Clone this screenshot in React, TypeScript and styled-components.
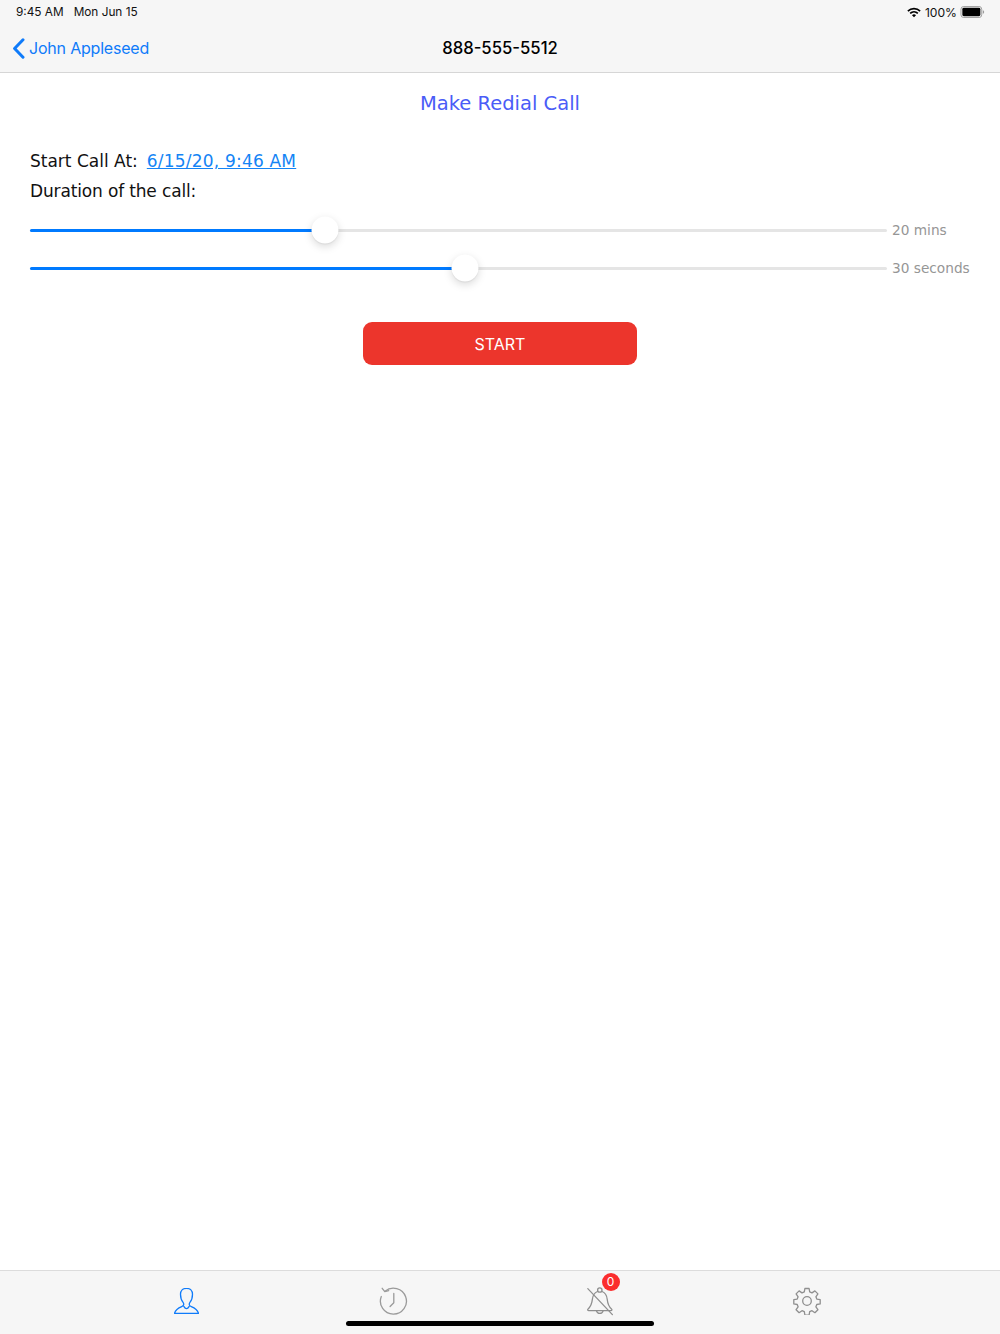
import React from "react";
import styled, { createGlobalStyle } from "styled-components";

const Global = createGlobalStyle`
  html, body { margin: 0; padding: 0; background: #fff; }
  #root { height: 1334px; }
  * { box-sizing: border-box; }
`;

const Page = styled.div`
  width: 1000px;
  height: 1334px;
  display: flex;
  flex-direction: column;
  overflow: hidden;
  font-family: "DejaVu Sans", sans-serif;
`;

const Header = styled.header`
  flex: none;
  height: 73px;
  background: #f6f6f6;
  border-bottom: 1px solid #d6d6d6;
  display: flex;
  flex-direction: column;
  font-family: Inter, "Liberation Sans", sans-serif;
`;

const StatusBar = styled.div`
  height: 24px;
  padding: 0 15px 0 16px;
  display: flex;
  align-items: center;
  font-size: 11.8px;
  color: #111;
`;

const StatusDate = styled.span`
  margin-left: 10px;
`;

const StatusRight = styled.div`
  margin-left: auto;
  display: flex;
  align-items: center;
  gap: 3px;
`;

const BatteryLevel = styled.span`
  margin-left: 1px;
  font-size: 12.1px;
`;

const NavBar = styled.div`
  flex: 1;
  display: grid;
  grid-template-columns: 1fr auto 1fr;
  align-items: center;
  padding: 0 12px;
`;

const BackLink = styled.div`
  display: flex;
  align-items: center;
  gap: 4px;
  color: #0f7bfa;
  font-size: 16px;
  letter-spacing: -0.2px;
`;

const NavTitle = styled.div`
  color: #000;
  font-size: 16.7px;
  font-weight: 500;
`;

const Main = styled.main`
  flex: 1;
  padding: 0 30px;
  display: flex;
  flex-direction: column;
`;

const Title = styled.h1`
  margin: 18px 0 0;
  text-align: center;
  color: #4a5cf7;
  font-size: 19.5px;
  line-height: 25px;
  font-weight: 400;
`;

const InfoLine = styled.div<{ $top: number; $tracking?: number }>`
  margin-top: ${(p) => p.$top}px;
  font-size: 17px;
  line-height: 22px;
  color: #111;
  letter-spacing: ${(p) => p.$tracking ?? 0}px;
`;

const DateLink = styled.a`
  margin-left: 9px;
  color: #1484f5;
  text-decoration: underline;
  letter-spacing: 0.2px;
`;

const Sliders = styled.div`
  margin-top: 13px;
  display: flex;
  flex-direction: column;
  gap: 8px;
`;

const SliderRow = styled.div`
  height: 30px;
  display: flex;
  align-items: center;
`;

const Track = styled.div`
  position: relative;
  flex: none;
  width: 857px;
  height: 3px;
  border-radius: 2px;
  background: #e5e5e5;
`;

const Fill = styled.div`
  height: 100%;
  border-radius: 2px;
  background: #007aff;
`;

const Thumb = styled.div`
  position: absolute;
  top: 50%;
  width: 27px;
  height: 27px;
  border-radius: 50%;
  transform: translate(-50%, -50%);
  background: #fff;
  box-shadow: 0 3px 8px rgba(0, 0, 0, 0.15), 0 1px 1px rgba(0, 0, 0, 0.06);
`;

const SliderValue = styled.span`
  margin-left: 5px;
  font-size: 13.7px;
  color: #969696;
  white-space: nowrap;
`;

const StartButton = styled.button`
  align-self: center;
  width: 274px;
  height: 43px;
  margin-top: 39px;
  border: 0;
  border-radius: 9px;
  background: #ec352c;
  color: #fff;
  font-family: Inter, "Liberation Sans", sans-serif;
  font-size: 16px;
`;

const TabBar = styled.nav`
  position: relative;
  flex: none;
  height: 64px;
  padding-right: 7px;
  background: #f6f6f6;
  border-top: 1px solid #dcdcdc;
  display: grid;
  grid-template-columns: repeat(4, 207px);
  justify-content: center;
`;

const Tab = styled.div<{ $color: string }>`
  position: relative;
  display: flex;
  justify-content: center;
  align-items: center;
  padding-bottom: 3px;
  color: ${(p) => p.$color};
`;

const Badge = styled.span`
  position: absolute;
  top: 2px;
  left: 50%;
  margin-left: 1.500px;
  width: 18px;
  height: 18px;
  border-radius: 50%;
  background: #fb2d2d;
  color: #fff;
  font-family: Inter, "Liberation Sans", sans-serif;
  font-size: 12px;
  line-height: 18px;
  text-align: center;
`;

const HomeIndicator = styled.div`
  position: absolute;
  left: 346px;
  bottom: 8px;
  width: 308px;
  height: 5px;
  border-radius: 3px;
  background: #000;
`;

const sliders = [
  { pct: (295 / 857) * 100, label: "20 mins" },
  { pct: (435 / 857) * 100, label: "30 seconds" },
];

const Wifi = () => (
  <svg width="14" height="11" viewBox="0 0 16 12">
    <path d="M1 4.400a10 10 0 0 1 14 0" fill="none" stroke="#000" strokeWidth="1.900" />
    <path d="M3.600 7a6.400 6.400 0 0 1 8.800 0" fill="none" stroke="#000" strokeWidth="1.900" />
    <path d="M8 11.500 5.700 9a3.300 3.300 0 0 1 4.600 0z" fill="#000" />
  </svg>
);

const Battery = () => (
  <svg width="25" height="12" viewBox="0 0 26 13">
    <rect x=".5" y=".5" width="22.500" height="12" rx="3" fill="none" stroke="#9a9a9a" />
    <rect x="2" y="2" width="19.500" height="9" rx="1.600" fill="#000" />
    <path d="M24.200 4.500c1 .3 1.400 1.100 1.400 2s-.4 1.700-1.400 2z" fill="#9a9a9a" />
  </svg>
);

const Chevron = () => (
  <svg width="13" height="21" viewBox="0 0 13 21">
    <path d="M11 1.800 2.600 10.500l8.400 8.700" fill="none" stroke="#0f7bfa" strokeWidth="3" strokeLinecap="round" strokeLinejoin="round" />
  </svg>
);

const lineIcon = { fill: "none", stroke: "currentColor", strokeWidth: 1.3, strokeLinecap: "round", strokeLinejoin: "round" } as const;

const PersonIcon = () => (
  <svg width="25" height="26" viewBox="0.500 1 25 26" {...lineIcon}>
    <path d="M13 1.400c-3.700 0-6 2.500-6 5.900 0 3.500 1.200 6.600 2.700 8.400.5.6.6 1.200.5 2-.1.9-.8 1.400-2 1.900-3 1.200-6.200 2.600-7.200 6.700h24c-1-4.100-4.200-5.500-7.200-6.700-1.200-.5-1.900-1-2-1.900-.1-.8 0-1.400.5-2C17.800 13.900 19 10.800 19 7.300c0-3.400-2.300-5.900-6-5.900z" />
    <path d="M10.300 19.400c.9 1.500 1.800 2.200 2.700 2.200s1.800-.7 2.700-2.200" />
  </svg>
);

const HistoryIcon = () => (
  <svg width="29" height="29" viewBox="0 0 29 29" {...lineIcon}>
    <path d="M6 4.300A13 13 0 1 1 2.300 9.500" />
    <path d="M3.200 1.300 5.800 4.600l3.900-.9" />
    <path d="M14.800 6.400v9.400l-3.700 3.700" />
  </svg>
);

const BellIcon = () => (
  <svg width="28" height="30" viewBox="0 0 28 30" {...lineIcon}>
    <circle cx="13.800" cy="4" r="2.200" />
    <path d="M11.500 5.500C7.800 6.900 6.800 9.800 6.400 13.200c-.4 3.600-1.200 7.100-4.300 9.700-.9.800-.4 1.800.7 1.800h22c1.100 0 1.600-1 .7-1.800-3.100-2.600-3.900-6.100-4.300-9.700-.4-3.400-1.400-6.300-5.100-7.700" />
    <path d="M10.500 24.800a3.400 3.400 0 0 0 6.600 0" />
    <path d="M1.800 2.600 26.400 28.600" />
  </svg>
);

const GearIcon = () => (
  <svg width="28" height="28" viewBox="0 0 28 28" {...lineIcon}>
    <circle cx="14" cy="14" r="4.300" />
    <path d="M11.900 1.500h4.200l.6 3.400 2.300 1 2.900-2 3 3-2 2.900.9 2.300 3.400.6v4.200l-3.400.6-.9 2.300 2 2.900-3 3-2.900-2-2.300 1-.6 3.400h-4.200l-.6-3.400-2.300-1-2.900 2-3-3 2-2.900-.9-2.300-3.400-.6v-4.200l3.400-.6.9-2.300-2-2.900 3-3 2.900 2 2.300-1z" />
  </svg>
);

export default function App() {
  return (
    <Page>
      <Global />
      <Header>
        <StatusBar>
          <span>9:45 AM</span>
          <StatusDate>Mon Jun 15</StatusDate>
          <StatusRight>
            <Wifi />
            <BatteryLevel>100%</BatteryLevel>
            <Battery />
          </StatusRight>
        </StatusBar>
        <NavBar>
          <BackLink>
            <Chevron />
            <span>John Appleseed</span>
          </BackLink>
          <NavTitle>888-555-5512</NavTitle>
          <span />
        </NavBar>
      </Header>
      <Main>
        <Title>Make Redial Call</Title>
        <InfoLine $top={34}>
          Start Call At:
          <DateLink>6/15/20, 9:46 AM</DateLink>
        </InfoLine>
        <InfoLine $top={8} $tracking={-0.15}>Duration of the call:</InfoLine>
        <Sliders>
          {sliders.map((s) => (
            <SliderRow key={s.label}>
              <Track>
                <Fill style={{ width: `${s.pct}%` }} />
                <Thumb style={{ left: `${s.pct}%` }} />
              </Track>
              <SliderValue>{s.label}</SliderValue>
            </SliderRow>
          ))}
        </Sliders>
        <StartButton>START</StartButton>
      </Main>
      <TabBar>
        <Tab $color="#0f7bfa"><PersonIcon /></Tab>
        <Tab $color="#9a9a9a"><HistoryIcon /></Tab>
        <Tab $color="#8f8f8f">
          <BellIcon />
          <Badge>0</Badge>
        </Tab>
        <Tab $color="#8f8f8f"><GearIcon /></Tab>
        <HomeIndicator />
      </TabBar>
    </Page>
  );
}
